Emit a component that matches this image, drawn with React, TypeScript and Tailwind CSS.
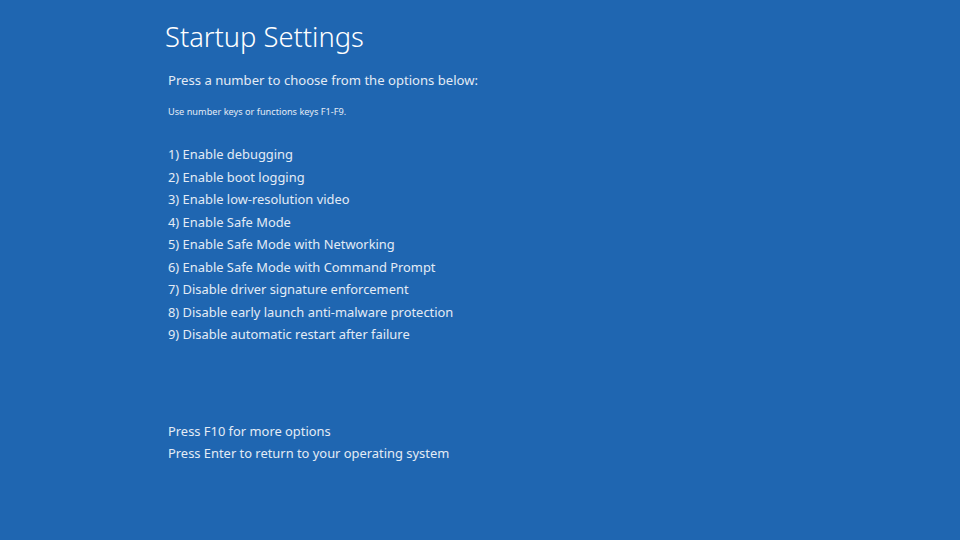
const options = [
  "1) Enable debugging",
  "2) Enable boot logging",
  "3) Enable low-resolution video",
  "4) Enable Safe Mode",
  "5) Enable Safe Mode with Networking",
  "6) Enable Safe Mode with Command Prompt",
  "7) Disable driver signature enforcement",
  "8) Disable early launch anti-malware protection",
  "9) Disable automatic restart after failure",
];

export default function App() {
  return (
    <div
      className="w-[960px] h-[540px] overflow-hidden bg-[#1f66b1] text-[#e3ebf5]"
      style={{ fontFamily: '"Noto Sans", "Open Sans", sans-serif' }}
    >
      <div className="pl-[165px] pt-[17px]">
        <h1 className="text-[27.3px] leading-[40px] font-light text-white">Startup Settings</h1>
      </div>

      <div className="pl-[168px]">
        <p className="mt-[13px] text-[13.1px] leading-[20px]">Press a number to choose from the options below:</p>
        <p className="mt-[15px] text-[9.2px] leading-[14px]">Use number keys or functions keys F1-F9.</p>

        <ul className="mt-[24px] flex flex-col">
          {options.map((o) => (
            <li key={o} className="text-[12.9px] leading-[22.5px]">
              {o}
            </li>
          ))}
        </ul>

        <div className="mt-[74px] flex flex-col">
          <p className="text-[12.9px] leading-[22.5px]">Press F10 for more options</p>
          <p className="text-[12.9px] leading-[22.5px]">Press Enter to return to your operating system</p>
        </div>
      </div>
    </div>
  );
}
